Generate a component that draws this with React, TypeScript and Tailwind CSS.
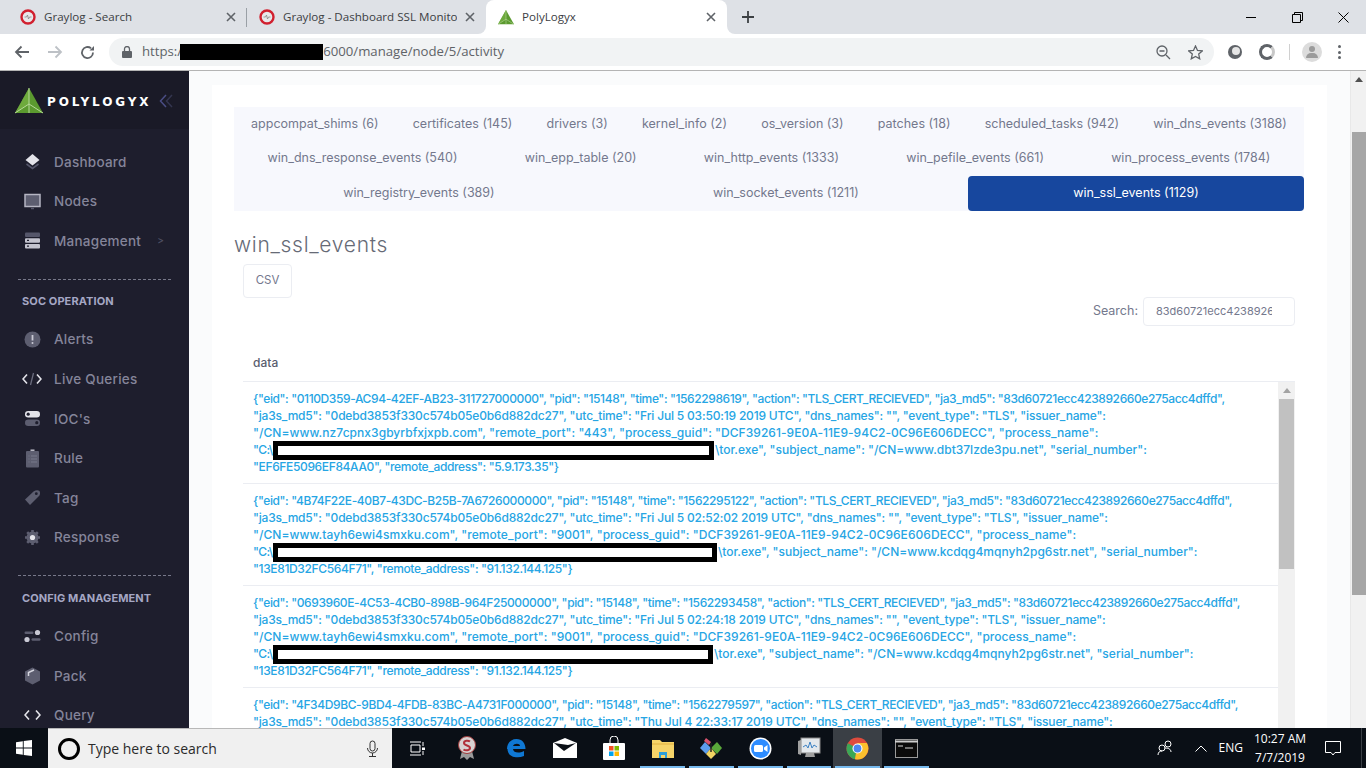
import React from "react";

const TABS = [
  ["appcompat_shims (6)", "certificates (145)", "drivers (3)", "kernel_info (2)", "os_version (3)", "patches (18)", "scheduled_tasks (942)", "win_dns_events (3188)"],
  ["win_dns_response_events (540)", "win_epp_table (20)", "win_http_events (1333)", "win_pefile_events (661)", "win_process_events (1784)"],
  ["win_registry_events (389)", "win_socket_events (1211)", "win_ssl_events (1129)"],
];

const Logo = ({ size = 28 }: { size?: number }) => (
  <svg width={size} height={size} viewBox="0 0 28 26">
    <path d="M14 0L28 25H0Z" fill="#5b9a2f" />
    <path d="M14 0L14 16L0 25Z" fill="#76b043" opacity="0.7" />
    <path d="M14 0L14 25M0 25L14 16L28 25" stroke="#b7d99a" strokeWidth="1" fill="none" />
  </svg>
);

const GraylogIcon = () => (
  <svg width="16" height="16" viewBox="0 0 16 16">
    <circle cx="8" cy="8" r="6.5" fill="#e8e8ea" stroke="#d1202f" strokeWidth="2.4" />
    <path d="M4.5 8h2l1-2 1 4 1-2h2" stroke="#888" strokeWidth="0.8" fill="none" />
  </svg>
);

const X = ({ color = "#5f6368" }: { color?: string }) => (
  <svg width="10" height="10" viewBox="0 0 10 10" className="shrink-0">
    <path d="M1 1l8 8M9 1l-8 8" stroke={color} strokeWidth="1.6" />
  </svg>
);

const Tab = ({ icon, title, box, active, divider }: { icon: React.ReactNode; title: string; box: string; active?: boolean; divider?: boolean }) => (
  <div className={`relative flex items-center h-[34px] pr-[11px] text-[11.6px] ${box} ${active ? "bg-white rounded-t-lg" : ""}`}>
    <span className="w-4 h-4 flex items-center justify-center shrink-0">{icon}</span>
    <span className="ml-2 mr-2 flex-1 overflow-hidden whitespace-nowrap text-[#3c4043]">{title}</span>
    <X />
    {divider && <span className="absolute right-0 top-2 h-[19px] w-px bg-[#9aa0a6]" />}
    {active && (
      <>
        <span className="absolute bottom-0 -left-2 w-2 h-2 bg-white">
          <span className="block w-2 h-2 bg-[#dee1e6] rounded-br-lg" />
        </span>
        <span className="absolute bottom-0 -right-2 w-2 h-2 bg-white">
          <span className="block w-2 h-2 bg-[#dee1e6] rounded-bl-lg" />
        </span>
      </>
    )}
  </div>
);

const icons: Record<string, React.ReactNode> = {
  Dashboard: (
    <svg width="17" height="17" viewBox="0 0 17 17">
      <path d="M8.5 1L15.5 7L8.5 12.5L1.5 7Z" fill="#e4e4ea" />
      <path d="M2.5 11L8.5 15.5L14.5 11" stroke="#55566a" strokeWidth="1.6" fill="none" />
    </svg>
  ),
  Nodes: (
    <svg width="17" height="17" viewBox="0 0 17 17">
      <rect x="1" y="1.5" width="15" height="12" fill="#5d5e70" stroke="#b5b5c2" strokeWidth="1.5" />
      <path d="M7 15.5h3" stroke="#55566a" strokeWidth="1.5" />
    </svg>
  ),
  Management: (
    <svg width="17" height="17" viewBox="0 0 17 17">
      <rect x="1" y="0.5" width="15" height="4.5" rx="1" fill="#55566a" />
      <rect x="1" y="6.2" width="15" height="4.5" rx="1" fill="#c4c4cf" />
      <rect x="1" y="12" width="15" height="4.5" rx="1" fill="#c4c4cf" />
      <path d="M3 8.4h2M3 14.2h2" stroke="#1e1e2d" strokeWidth="1.2" />
    </svg>
  ),
  Alerts: (
    <svg width="17" height="17" viewBox="0 0 17 17">
      <circle cx="8.5" cy="8.5" r="8" fill="#5d5e70" />
      <path d="M8.5 4v5.5" stroke="#c9c9d4" strokeWidth="1.8" />
      <circle cx="8.5" cy="12" r="1" fill="#c9c9d4" />
    </svg>
  ),
  "Live Queries": (
    <svg width="20" height="14" viewBox="0 0 20 14">
      <path d="M5 2.5L1 7l4 4.5M15 2.5L19 7l-4 4.5" stroke="#e4e4ea" strokeWidth="1.6" fill="none" />
      <path d="M11.5 1L8.5 13" stroke="#6b6c7e" strokeWidth="1.3" />
    </svg>
  ),
  "IOC's": (
    <svg width="17" height="17" viewBox="0 0 17 17">
      <rect x="1" y="1" width="15" height="6.5" rx="3.2" fill="#e4e4ea" />
      <circle cx="4.2" cy="4.2" r="1.6" fill="#1e1e2d" />
      <rect x="1" y="9.5" width="15" height="6.5" rx="3.2" fill="#5d5e70" />
      <circle cx="12.8" cy="12.7" r="1.6" fill="#1e1e2d" />
    </svg>
  ),
  Rule: (
    <svg width="17" height="19" viewBox="0 0 17 19">
      <rect x="2" y="2" width="13" height="16.5" rx="1" fill="#5d5e70" />
      <path d="M6.5 1.2h4" stroke="#c9c9d4" strokeWidth="1.4" />
      <path d="M4.5 7h1M7 7h6M4.5 10h1M7 10h6M4.5 13h1M7 13h6" stroke="#7c7d8e" strokeWidth="0.9" />
    </svg>
  ),
  Tag: (
    <svg width="17" height="17" viewBox="0 0 17 17">
      <path d="M1 10.5L9.5 2.5Q13 0.5 15.5 2Q17 5 14.5 7.5L6 16Z" fill="#5d5e70" />
      <circle cx="12.3" cy="4.7" r="1.4" fill="#1e1e2d" />
    </svg>
  ),
  Response: (
    <svg width="17" height="17" viewBox="0 0 17 17">
      <circle cx="8.5" cy="8.5" r="6" fill="#5d5e70" />
      <path d="M8.5 1v15M1 8.5h15M3.2 3.2l10.6 10.6M13.8 3.2L3.2 13.8" stroke="#5d5e70" strokeWidth="2.6" />
      <circle cx="8.5" cy="8.5" r="2.6" fill="#e4e4ea" />
    </svg>
  ),
  Config: (
    <svg width="17" height="14" viewBox="0 0 17 14">
      <rect x="0.5" y="2.5" width="9" height="2.4" rx="1.2" fill="#5d5e70" />
      <circle cx="13.5" cy="3.5" r="2.6" fill="#c9c9d4" />
      <circle cx="3" cy="10.5" r="2.6" fill="#c9c9d4" />
      <rect x="7.5" y="9.3" width="9" height="2.4" rx="1.2" fill="#5d5e70" />
    </svg>
  ),
  Pack: (
    <svg width="17" height="18" viewBox="0 0 17 18">
      <path d="M8.5 0.5L16 4.5V13.5L8.5 17.5L1 13.5V4.5Z" fill="#5d5e70" />
      <path d="M4.5 9V5.5L10 3" stroke="#d5d5de" strokeWidth="1.5" fill="none" />
    </svg>
  ),
  Query: (
    <svg width="17" height="12" viewBox="0 0 17 12">
      <path d="M5 1.5L1 6l4 4.5M12 1.5L16 6l-4 4.5" stroke="#e4e4ea" strokeWidth="1.6" fill="none" />
    </svg>
  ),
};

const NavItem = ({ label, chevron }: { label: string; chevron?: boolean }) => (
  <div className="flex items-center h-[39.6px] pl-[22px] pr-5 text-[13.5px] tracking-[0.25px] font-medium text-[#85859a]">
    <span className="w-[20px] flex justify-center shrink-0">{icons[label]}</span>
    <span className="ml-[12px]">{label}</span>
    {chevron && <span className="ml-[16px] text-[10px] text-[#4f5063]">&gt;</span>}
  </div>
);

const SectionHead = ({ title }: { title: string }) => (
  <>
    <div className="mx-[18px] mt-[18px] border-t border-dashed border-[#77788a]" />
    <div className="h-[40px] pl-[22px] pt-[3px] flex items-center text-[11px] font-bold tracking-[0.1px] text-[#a5a7c4]">{title}</div>
  </>
);

const Redact = ({ width }: { width: string }) => (
  <span className={`inline-block h-[19px] -my-1 mr-px align-middle border-[5px] border-black bg-white ${width}`} />
);

type Row = { l1: string; l2: string; l3: string; box: string; l4: string; l5: string };

const ROWS: Row[] = [
  {
    l1: '{"eid": "0110D359-AC94-42EF-AB23-311727000000", "pid": "15148", "time": "1562298619", "action": "TLS_CERT_RECIEVED", "ja3_md5": "83d60721ecc423892660e275acc4dffd",',
    l2: '"ja3s_md5": "0debd3853f330c574b05e0b6d882dc27", "utc_time": "Fri Jul 5 03:50:19 2019 UTC", "dns_names": "", "event_type": "TLS", "issuer_name":',
    l3: '"/CN=www.nz7cpnx3gbyrbfxjxpb.com", "remote_port": "443", "process_guid": "DCF39261-9E0A-11E9-94C2-0C96E606DECC", "process_name":',
    box: "w-[441px]",
    l4: '\\tor.exe", "subject_name": "/CN=www.dbt37lzde3pu.net", "serial_number":',
    l5: '"EF6FE5096EF84AA0", "remote_address": "5.9.173.35"}',
  },
  {
    l1: '{"eid": "4B74F22E-40B7-43DC-B25B-7A6726000000", "pid": "15148", "time": "1562295122", "action": "TLS_CERT_RECIEVED", "ja3_md5": "83d60721ecc423892660e275acc4dffd",',
    l2: '"ja3s_md5": "0debd3853f330c574b05e0b6d882dc27", "utc_time": "Fri Jul 5 02:52:02 2019 UTC", "dns_names": "", "event_type": "TLS", "issuer_name":',
    l3: '"/CN=www.tayh6ewi4smxku.com", "remote_port": "9001", "process_guid": "DCF39261-9E0A-11E9-94C2-0C96E606DECC", "process_name":',
    box: "w-[444px]",
    l4: '\\tor.exe", "subject_name": "/CN=www.kcdqg4mqnyh2pg6str.net", "serial_number":',
    l5: '"13E81D32FC564F71", "remote_address": "91.132.144.125"}',
  },
  {
    l1: '{"eid": "0693960E-4C53-4CB0-898B-964F25000000", "pid": "15148", "time": "1562293458", "action": "TLS_CERT_RECIEVED", "ja3_md5": "83d60721ecc423892660e275acc4dffd",',
    l2: '"ja3s_md5": "0debd3853f330c574b05e0b6d882dc27", "utc_time": "Fri Jul 5 02:24:18 2019 UTC", "dns_names": "", "event_type": "TLS", "issuer_name":',
    l3: '"/CN=www.tayh6ewi4smxku.com", "remote_port": "9001", "process_guid": "DCF39261-9E0A-11E9-94C2-0C96E606DECC", "process_name":',
    box: "w-[440px]",
    l4: '\\tor.exe", "subject_name": "/CN=www.kcdqg4mqnyh2pg6str.net", "serial_number":',
    l5: '"13E81D32FC564F71", "remote_address": "91.132.144.125"}',
  },
  {
    l1: '{"eid": "4F34D9BC-9BD4-4FDB-83BC-A4731F000000", "pid": "15148", "time": "1562279597", "action": "TLS_CERT_RECIEVED", "ja3_md5": "83d60721ecc423892660e275acc4dffd",',
    l2: '"ja3s_md5": "0debd3853f330c574b05e0b6d882dc27", "utc_time": "Thu Jul 4 22:33:17 2019 UTC", "dns_names": "", "event_type": "TLS", "issuer_name":',
    l3: "",
    box: "",
    l4: "",
    l5: "",
  },
];

const TaskIcon = ({ children, active, underline }: { children: React.ReactNode; active?: boolean; underline?: boolean }) => (
  <div className={`relative w-[48.8px] h-10 flex items-center justify-center ${active ? "bg-[#3a3f45]" : ""}`}>
    {children}
    {underline && <span className="absolute bottom-0 left-[2px] right-[2px] h-[2px] bg-[#76b9ed]" />}
  </div>
);

export default function App() {
  return (
    <div className="h-screen w-[1366px] overflow-hidden flex flex-col font-[Inter,sans-serif] bg-white">
      {/* browser tabs */}
      <div className="h-[34px] shrink-0 bg-[#dee1e6] flex font-['Open_Sans',sans-serif]">
        <Tab icon={<GraylogIcon />} title="Graylog - Search" box="w-[247px] pl-5" divider />
        <Tab icon={<GraylogIcon />} title="Graylog - Dashboard SSL Monitor" box="w-[239px] pl-3" />
        <Tab icon={<Logo size={17} />} title="PolyLogyx" box="w-[241px] pl-3" active />
        <div className="ml-[14px] flex items-center">
          <svg width="14" height="14" viewBox="0 0 14 14"><path d="M7 1v12M1 7h12" stroke="#3c4043" strokeWidth="1.8" /></svg>
        </div>
        <div className="flex-1" />
        <div className="flex items-center">
          <div className="w-[46px] flex justify-center"><span className="w-[10px] h-px bg-black" /></div>
          <div className="w-[46px] flex justify-center">
            <svg width="11" height="11" viewBox="0 0 11 11"><path d="M2.5 2.5V.5h8v8h-2M.5 2.5h8v8h-8z" stroke="#000" fill="none" /></svg>
          </div>
          <div className="w-[46px] flex justify-center">
            <svg width="11" height="11" viewBox="0 0 11 11"><path d="M.5.5l10 10M10.5.5l-10 10" stroke="#000" /></svg>
          </div>
        </div>
      </div>

      {/* address bar */}
      <div className="h-[37px] shrink-0 flex items-center border-b border-[#b4b4b4] pl-[14px] pr-[10px]">
        <svg width="16" height="14" viewBox="0 0 16 14"><path d="M15 7H2M7.5 1.5L2 7l5.5 5.5" stroke="#5f6368" strokeWidth="1.8" fill="none" /></svg>
        <svg className="ml-[17px]" width="16" height="14" viewBox="0 0 16 14"><path d="M1 7h13M8.5 1.5L14 7l-5.5 5.5" stroke="#bdc1c6" strokeWidth="1.8" fill="none" /></svg>
        <svg className="ml-[17px]" width="15" height="15" viewBox="0 0 15 15"><path d="M13 7.5A5.5 5.5 0 1 1 11 3.3" stroke="#5f6368" strokeWidth="1.8" fill="none" /><path d="M9.5 5.5H14V1Z" fill="#5f6368" /></svg>
        <div className="ml-[14px] w-[1105px] h-7 rounded-full bg-[#f1f3f4] flex items-center pl-[13px] pr-[11px] font-['Open_Sans',sans-serif] text-[13.2px] text-[#5f6368]">
          <svg width="10" height="12" viewBox="0 0 10 12"><rect y="5" width="10" height="7" rx="1" fill="#5f6368" /><path d="M2.5 5V3a2.5 2.5 0 0 1 5 0v2" stroke="#5f6368" strokeWidth="1.3" fill="none" /></svg>
          <span className="ml-[10px]">https:/</span>
          <span className="w-[143px] h-[16px] bg-black -ml-[2px]" />
          <span>6000/manage/node/5/activity</span>
          <div className="flex-1" />
          <svg width="15" height="15" viewBox="0 0 15 15"><circle cx="6" cy="6" r="5" stroke="#5f6368" strokeWidth="1.3" fill="none" /><path d="M3.5 6h5M10 10l4 4" stroke="#5f6368" strokeWidth="1.3" /></svg>
          <svg className="ml-[17px]" width="15" height="15" viewBox="0 0 15 15"><path d="M7.5 1l2 4.4 4.8.5-3.6 3.2 1 4.7-4.200-2.4-4.200 2.4 1-4.700L.7 5.900l4.800-.5z" stroke="#5f6368" strokeWidth="1.3" fill="none" /></svg>
        </div>
        <div className="ml-[14px] w-[14px] h-[14px] rounded-full bg-[#5f6368] relative shrink-0"><span className="absolute left-[4px] top-[2px] w-[8px] h-[8px] rounded-full bg-[#e6e6e6]" /></div>
        <div className="ml-[17px] w-[16px] h-[16px] rounded-full border-[3px] border-[#5f6368] border-r-[#c8c8c8] shrink-0" />
        <div className="ml-[14px] w-px h-[16px] bg-[#d0d0d0]" />
        <div className="ml-[12px] w-5 h-5 rounded-full bg-[#dcdcdc] flex flex-col items-center justify-center shrink-0">
          <span className="w-[6px] h-[6px] rounded-full bg-[#9b9b9b]" />
          <span className="mt-px w-[12px] h-[5px] rounded-t-full bg-[#9b9b9b]" />
        </div>
        <div className="ml-[16px] flex flex-col gap-[2.5px]">
          <span className="w-[3px] h-[3px] rounded-full bg-[#5f6368]" />
          <span className="w-[3px] h-[3px] rounded-full bg-[#5f6368]" />
          <span className="w-[3px] h-[3px] rounded-full bg-[#5f6368]" />
        </div>
      </div>

      {/* app */}
      <div className="flex-1 flex min-h-0">
        <aside className="w-[189px] shrink-0 bg-[#1e1e2d] overflow-hidden">
          <div className="h-[58px] bg-[#1a1a27] flex items-center pl-[15px] pt-[1px]">
            <Logo size={28} />
            <span className="ml-[4px] mt-[2px] w-[103px] text-[12px] font-bold tracking-[2.9px] whitespace-nowrap text-white font-['DejaVu_Sans',sans-serif]">POLYLOGYX</span>
            <svg className="ml-[9px]" width="15" height="14" viewBox="0 0 15 14"><path d="M7 1L1.5 7 7 13" stroke="#4a4d85" strokeWidth="1.5" fill="none" /><path d="M13 1L7.5 7 13 13" stroke="#33354f" strokeWidth="1.5" fill="none" /></svg>
          </div>
          <div className="pt-[13px]">
            <NavItem label="Dashboard" />
            <NavItem label="Nodes" />
            <NavItem label="Management" chevron />
          </div>
          <SectionHead title="SOC OPERATION" />
          {["Alerts", "Live Queries", "IOC's", "Rule", "Tag", "Response"].map((l) => (
            <NavItem key={l} label={l} />
          ))}
          <SectionHead title="CONFIG MANAGEMENT" />
          {["Config", "Pack", "Query"].map((l) => (
            <NavItem key={l} label={l} />
          ))}
        </aside>

        <main className="flex-1 bg-[#fafbfc] pl-[23px] pr-[23px] pt-[14px] overflow-hidden min-w-0">
          <div className="w-[1115px] h-[900px] bg-white pl-[22px] pr-[23px] pt-[22px]">
            <div className="bg-[#f7f8fd] text-[12.5px] text-[#74788d]">
              {TABS.map((row, i) => (
                <div key={i} className={`flex ${i === 2 ? "h-[35px] mt-px" : "h-[34px]"}`}>
                  {row.map((t) => (
                    <div
                      key={t}
                      className={`px-[15px] flex items-center justify-center whitespace-nowrap rounded-sm ${t.startsWith("win_ssl") ? "w-[336px] shrink-0 bg-[#17479e] text-white" : "grow"}`}
                    >
                      {t}
                    </div>
                  ))}
                </div>
              ))}
            </div>

            <h2 className="mt-[19px] text-[21px] tracking-[0.7px] leading-[30px] font-light text-[#666a76]">win_ssl_events</h2>
            <button className="block ml-[9px] mt-[4px] w-[49px] h-[34px] bg-white border border-[#ebedf2] rounded-sm text-[11.5px] text-[#74788d]">CSV</button>

            <div className="flex justify-end items-center h-[30px] -mt-[2px] pr-[9px]">
              <span className="text-[12.5px] text-[#74788d]">Search:</span>
              <div className="ml-[5px] w-[152px] h-[29px] border border-[#ebedf2] rounded-sm pl-[12px] flex items-center text-[11px] whitespace-nowrap text-[#74788d]">
                <span className="w-[116px] overflow-hidden">83d60721ecc423892660e275acc4dffd</span>
              </div>
            </div>

            <div className="ml-[9px] w-[1052px]">
              <div className="h-[55px] pl-[10px] pt-[28px] text-[12px] leading-[18px] font-medium text-[#595d6e]">data</div>
              <div className="flex border-t border-[#ebedf2]">
                <div className="w-[1035px] shrink-0 text-[12px] leading-[17px] font-medium text-[#26a5e4] whitespace-nowrap">
                  {ROWS.map((r, i) => (
                    <div key={i} className="h-[102px] pl-[10px] pt-[8px] border-b border-[#ebedf2]">
                      <div className="tracking-[-0.39px]">{r.l1}</div>
                      <div className="tracking-[-0.18px]">{r.l2}</div>
                      <div className="tracking-[0.05px]">{r.l3}</div>
                      <div className="h-[17px]">
                        {r.box && (
                          <>
                            <span className="inline-block w-[20px] tracking-[-0.6px]">{'"C:\\'}</span>
                            <Redact width={r.box} />
                          </>
                        )}
                        {r.l4}
                      </div>
                      <div className="tracking-[-0.36px]">{r.l5}</div>
                    </div>
                  ))}
                </div>
                <div className="w-[17px] bg-[#f1f1f1] flex flex-col items-center">
                  <div className="h-[17px] flex items-center justify-center">
                    <span className="w-0 h-0 border-x-[4px] border-x-transparent border-b-[5px] border-b-[#a3a3a3]" />
                  </div>
                  <div className="w-[15px] h-[170px] bg-[#c1c1c1]" />
                </div>
              </div>
            </div>
          </div>
        </main>

        {/* page scrollbar */}
        <div className="w-[16px] shrink-0 bg-[#f1f1f1] flex flex-col items-center border-l border-[#e8e8e8]">
          <div className="h-[61px] pt-[6px]">
            <span className="block w-0 h-0 border-x-[4px] border-x-transparent border-b-[5px] border-b-[#505050]" />
          </div>
          <div className="w-[14px] h-[463px] bg-[#a6a6a6]" />
        </div>
      </div>

      {/* taskbar */}
      <div className="h-10 shrink-0 bg-[#0a0f16] flex items-center text-white font-['Open_Sans',sans-serif]">
        <div className="w-[48px] flex justify-center">
          <svg width="16" height="16" viewBox="0 0 16 16"><path d="M0 2.3l6.800-1v6.200H0zM7.700 1.100L16 0v7.500H7.700zM0 8.500h6.800v6.200L0 13.700zM7.700 8.500H16V16l-8.300-1.100z" fill="#fff" /></svg>
        </div>
        <div className="w-[344px] h-10 bg-[#f0f0f0] border-t border-[#b8b8b8] flex items-center pl-[10px] pr-[13px] text-[#2b2b2b] text-[14px]">
          <span className="w-[22px] h-[22px] rounded-full border-[3px] border-black" />
          <span className="ml-[8px] flex-1">Type here to search</span>
          <svg width="13" height="18" viewBox="0 0 13 18"><rect x="4" y="1" width="5" height="10" rx="2.5" stroke="#333" fill="none" /><path d="M1.500 8a5 5 0 0 0 10 0M6.500 13v3M3 16.500h7" stroke="#333" fill="none" /></svg>
        </div>
        <div className="w-[51px] flex justify-center">
          <svg width="17" height="15" viewBox="0 0 17 15"><path d="M1 1h11M1 14h11M2 4h9v7H2zM14 1v4M14 10v4" stroke="#fff" fill="none" /><rect x="13" y="6.5" width="3" height="2.5" fill="#fff" /></svg>
        </div>
        <TaskIcon>
          <svg width="20" height="24" viewBox="0 0 20 24"><path d="M5 15l-2 8 4-2 3 3 3-3 4 2-2-8z" fill="#9a9a9a" /><circle cx="10" cy="9" r="8.5" fill="#d8d2d2" stroke="#a03a3a" /><path d="M13 5.500C11 4 7 4.500 7 7c0 3 6 2 6 5 0 2.500-4.500 3-6.500 1.500" stroke="#b0303a" strokeWidth="2" fill="none" /></svg>
        </TaskIcon>
        <TaskIcon>
          <svg width="20" height="20" viewBox="0 0 20 20"><path d="M1 11C1 5 5 1 10.500 1 16 1 19.500 5 19.500 11H7c.3 3.500 5.500 5 11 2v5c-7 3-16.500 1-16.500-7z" fill="#0f78d4" /><path d="M7 8h7c0-3-6-3-7 0z" fill="#0a0f16" /></svg>
        </TaskIcon>
        <TaskIcon>
          <svg width="24" height="20" viewBox="0 0 24 20"><path d="M0 5L12 0l12 5v15H0z" fill="#fff" /><path d="M1 5l10 8 12-8-8 2z" fill="#0a0f16" /></svg>
        </TaskIcon>
        <TaskIcon>
          <svg width="22" height="24" viewBox="0 0 22 24"><path d="M7 7V4a4 4 0 0 1 8 0v3" stroke="#fff" fill="none" /><rect y="7" width="22" height="17" rx="1" fill="#fff" /><rect x="6" y="10" width="4.5" height="4.5" fill="#f25022" /><rect x="11.5" y="10" width="4.5" height="4.5" fill="#7fba00" /><rect x="6" y="15.5" width="4.5" height="4.5" fill="#00a4ef" /><rect x="11.5" y="15.5" width="4.5" height="4.5" fill="#ffb900" /></svg>
        </TaskIcon>
        <TaskIcon underline>
          <svg width="22" height="19" viewBox="0 0 22 19"><path d="M0 1h8l2 2h12v16H0z" fill="#f6d469" /><path d="M0 5h22" stroke="#e0b040" /><path d="M7 19v-6h8v6h-2v-3H9v3z" fill="#2d9fd8" /></svg>
        </TaskIcon>
        <TaskIcon underline>
          <svg width="24" height="24" viewBox="0 0 24 24"><path d="M12 12L6 6 1 12l6 6z" fill="#5c9ded" /><path d="M12 12l6-6 5 6-5 6z" fill="#5aa83a" /><path d="M12 12l-5 6 5 5 5-5z" fill="#f2d463" /><path d="M7 2l5 4-2 3-5-4z" fill="#d9536f" /><path d="M12 7v9" stroke="#222" strokeWidth="1.5" /></svg>
        </TaskIcon>
        <TaskIcon underline>
          <svg width="23" height="23" viewBox="0 0 23 23"><circle cx="11.5" cy="11.5" r="11" fill="#fff" /><circle cx="11.5" cy="11.5" r="9.5" fill="#2d8cff" /><rect x="5" y="8" width="9" height="7" rx="1.5" fill="#fff" /><path d="M15 10.500l3.500-2.500v7L15 12.500z" fill="#fff" /></svg>
        </TaskIcon>
        <TaskIcon underline>
          <svg width="24" height="22" viewBox="0 0 24 22"><rect x="4" y="1" width="19" height="15" fill="#e4e8ec" stroke="#888" /><path d="M6 10l3-2 2 3 2-6 2 6 2-3 3 2" stroke="#3d82c4" fill="none" /><path d="M1 4v13l3 1V3zM9 16h8l1 4H8z" fill="#a0a0a0" /></svg>
        </TaskIcon>
        <TaskIcon active underline>
          <svg width="23" height="23" viewBox="0 0 23 23"><circle cx="11.5" cy="11.5" r="11" fill="#dd4b3d" /><path d="M11.500 11.500L1.900 6.200A11 11 0 0 0 9 22.200z" fill="#3aa757" /><path d="M11.500 6h9.300A11 11 0 0 1 9 22.200z" fill="#fbc02d" /><circle cx="11.5" cy="11.5" r="5" fill="#fff" /><circle cx="11.5" cy="11.5" r="3.9" fill="#4b87f0" /></svg>
        </TaskIcon>
        <TaskIcon underline>
          <svg width="23" height="19" viewBox="0 0 23 19"><rect x="0.5" y="0.5" width="22" height="18" fill="#0b0b0b" stroke="#9a9a9a" /><path d="M0 2.500h23" stroke="#cfcfcf" strokeWidth="2" /><path d="M3 7h5M10 9h8" stroke="#ddd" /></svg>
        </TaskIcon>
        <div className="flex-1" />
        <svg width="16" height="16" viewBox="0 0 16 16"><circle cx="5" cy="8" r="3" stroke="#fff" fill="none" /><circle cx="11" cy="4" r="3" stroke="#fff" fill="none" /><path d="M1 15c0-3 2-4 4-4M8 8c3 0 6 1 6 4" stroke="#fff" fill="none" /></svg>
        <svg className="ml-[22px]" width="12" height="7" viewBox="0 0 12 7"><path d="M0.500 6.500L6 1l5.500 5.500" stroke="#fff" fill="none" /></svg>
        <span className="ml-[12px] text-[12px]">ENG</span>
        <div className="ml-[12px] w-[50px] text-center text-[12px] leading-[19px] whitespace-nowrap flex flex-col items-center">
          <span>10:27 AM</span>
          <span>7/7/2019</span>
        </div>
        <svg className="ml-[20px]" width="16" height="15" viewBox="0 0 16 15"><path d="M.5.5h15v11H10l-2 2.500-2-2.500H.5z" stroke="#fff" fill="none" /></svg>
        <div className="ml-[20px] w-px h-10 bg-[#3a3f45]" />
        <div className="w-[4px]" />
      </div>
    </div>
  );
}
